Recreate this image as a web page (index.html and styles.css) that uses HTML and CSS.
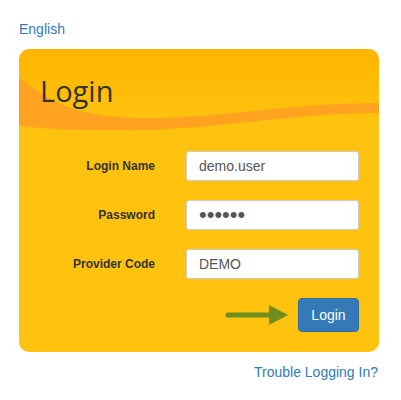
FILE: index.html
```html
<!DOCTYPE html>
<html lang="en">
<head>
  <meta charset="UTF-8" />
  <title>Login</title>
  <link rel="stylesheet" href="styles.css">
</head>
<body>
  <div class="page">
    <a href="#" class="lang">English</a>

    <div class="card">
      <!-- orange swoosh behind the title -->
      <svg class="wave" width="360" height="90" viewBox="0 0 360 90" preserveAspectRatio="none">
        <path d="M0 28 C 25 50, 55 68, 120 69 C 200 70, 280 53, 360 54 L 360 64 C 280 63, 200 80, 120 81 C 60 82, 15 80, 0 76 Z" fill="#ffa21f" />
      </svg>

      <h1>Login</h1>

      <form class="login-form">
        <div class="row">
          <label>Login Name</label>
          <input type="text" value="demo.user" />
        </div>
        <div class="row">
          <label>Password</label>
          <input type="password" value="secret" />
        </div>
        <div class="row">
          <label>Provider Code</label>
          <input type="text" value="DEMO" />
        </div>
        <div class="actions">
          <svg class="arrow" width="64" height="20" viewBox="0 0 64 20">
            <line x1="3" y1="10" x2="46" y2="10" stroke="#6f8c1e" stroke-width="5" stroke-linecap="round" />
            <polygon points="44,0 63,10 44,20" fill="#6f8c1e" />
          </svg>
          <button type="button">Login</button>
        </div>
      </form>
    </div>

    <div class="trouble"><a href="#">Trouble Logging In?</a></div>
  </div>
</body>
</html>
```

FILE: styles.css
```css
body {
  margin: 0;
  font-family: "Liberation Sans", Arial, sans-serif;
  font-size: 14px;
  color: #333;
  background: #fff;
}
a {
  color: #337ab7;
  text-decoration: none;
}
.page {
  padding: 20px 22px 0 19px;
}
.lang {
  display: block;
  line-height: 18px;
  margin-bottom: 11px;
}
.card {
  position: relative;
  overflow: hidden;
  height: 303px;
  border-radius: 10px;
  background: linear-gradient(#ffb500 0, #ffc20e 70px, #ffc20e 100%);
}
.wave {
  position: absolute;
  left: 0;
  top: 0;
}
h1 {
  position: relative;
  margin: 0;
  padding: 24px 0 0 21px;
  font-family: "Open Sans", sans-serif;
  font-size: 29px;
  font-weight: normal;
  line-height: 36px;
  color: #333;
}
.login-form {
  position: relative;
  margin-top: 42px;
}
.row {
  display: flex;
  align-items: center;
  height: 30px;
  margin-bottom: 19px;
}
.row label {
  width: 136px;
  text-align: right;
  font-weight: bold;
  font-size: 12px;
  color: #333;
}
.row input {
  margin-left: 31px;
  width: 173px;
  height: 30px;
  box-sizing: border-box;
  padding: 4px 12px;
  border: 1px solid #ccc;
  border-radius: 3px;
  font-family: inherit;
  font-size: 14px;
  color: #555;
}
.row input[type="password"] {
  font-size: 22px;
  padding: 0 12px;
}
.actions {
  display: flex;
  align-items: center;
  justify-content: flex-end;
  padding-right: 20px;
}
.arrow {
  margin-right: 9px;
}
button {
  width: 61px;
  height: 34px;
  border: 1px solid #2e6da4;
  border-radius: 4px;
  background: #337ab7;
  color: #fff;
  font-family: inherit;
  font-size: 14px;
}
.trouble {
  text-align: right;
  margin-top: 11px;
  padding-right: 1px;
  line-height: 18px;
}
```
